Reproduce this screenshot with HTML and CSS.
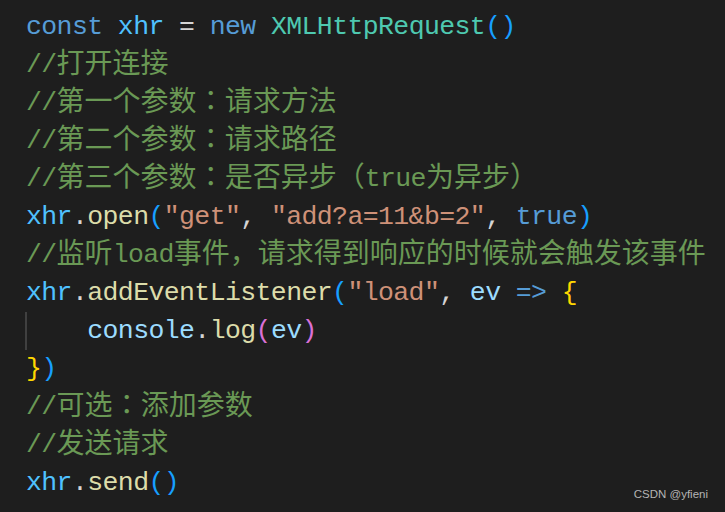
FILE: index.html
```html
<!DOCTYPE html>
<html>
<head>
<meta charset="utf-8">
<link rel="stylesheet" href="styles.css">
</head>
<body>
<div class="editor">
  <div class="line"><span class="kw">const</span> <span class="var">xhr</span> <span class="op">=</span> <span class="kw">new</span> <span class="cls">XMLHttpRequest</span><span class="b3">()</span></div>
  <div class="line cm">//<span class="zh">打开连接</span></div>
  <div class="line cm">//<span class="zh">第一个参数<span class="tc">：</span>请求方法</span></div>
  <div class="line cm">//<span class="zh">第二个参数<span class="tc">：</span>请求路径</span></div>
  <div class="line cm">//<span class="zh">第三个参数<span class="tc">：</span>是否异步（</span>true<span class="zh">为异步）</span></div>
  <div class="line"><span class="var">xhr</span><span class="op">.</span><span class="fn">open</span><span class="b3">(</span><span class="str">"get"</span><span class="op">, </span><span class="str">"add?a=11&amp;b=2"</span><span class="op">, </span><span class="kw">true</span><span class="b3">)</span></div>
  <div class="line cm">//<span class="zh">监听</span>load<span class="zh">事件，请求得到响应的时候就会触发该事件</span></div>
  <div class="line"><span class="var">xhr</span><span class="op">.</span><span class="fn">addEventListener</span><span class="b3">(</span><span class="str">"load"</span><span class="op">, </span><span class="prm">ev</span> <span class="kw">=&gt;</span> <span class="b1">{</span></div>
  <div class="line guide">    <span class="prm">console</span><span class="op">.</span><span class="fn">log</span><span class="b2">(</span><span class="prm">ev</span><span class="b2">)</span></div>
  <div class="line"><span class="b1">}</span><span class="b3">)</span></div>
  <div class="line cm">//<span class="zh">可选<span class="tc">：</span>添加参数</span></div>
  <div class="line cm">//<span class="zh">发送请求</span></div>
  <div class="line"><span class="var">xhr</span><span class="op">.</span><span class="fn">send</span><span class="b3">()</span></div>
</div>
<div class="mark">CSDN @yfieni</div>
</body>
</html>
```

FILE: styles.css
```css
html, body {
  margin: 0;
  padding: 0;
  background: #1e1e1e;
  width: 725px;
  height: 512px;
  overflow: hidden;
}
.editor {
  padding: 8px 0 0 26px;
  font-family: "Liberation Mono", "DejaVu Sans Mono", monospace;
  font-size: 26.5px;
  letter-spacing: -0.6px;
  color: #d4d4d4;
}
.line {
  height: 38px;
  line-height: 38px;
  white-space: pre;
  position: relative;
}
.zh {
  font-family: "Noto Sans CJK SC", sans-serif;
  font-size: 28px;
  letter-spacing: 0;
  line-height: 1;
  position: relative;
  top: 1px;
}
.tc {
  font-family: "Noto Sans CJK TC", sans-serif;
}
.kw { color: #569cd6; }
.var { color: #4fc1ff; }
.op { color: #d4d4d4; }
.cls { color: #4ec9b0; }
.fn { color: #dcdcaa; }
.str { color: #ce9178; }
.prm { color: #9cdcfe; }
.cm { color: #6a9955; }
.b1 { color: #ffd700; }
.b2 { color: #da70d6; }
.b3 { color: #179fff; }
.guide::before {
  content: "";
  position: absolute;
  left: -1px;
  top: 0;
  width: 2px;
  height: 38px;
  background: #404040;
}
.mark {
  position: absolute;
  right: 17px;
  bottom: 12px;
  font-family: "Liberation Sans", Arial, sans-serif;
  font-size: 11.5px;
  color: #b4b4b4;
}
```
